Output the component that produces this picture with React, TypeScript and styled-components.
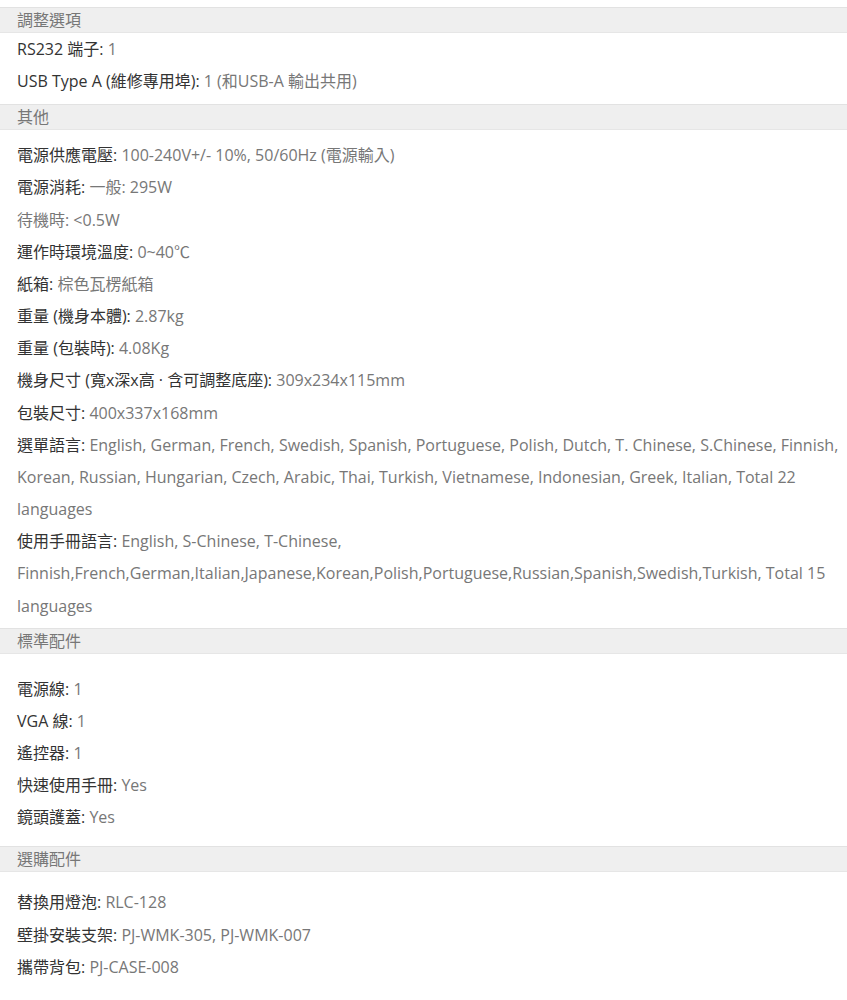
import React from "react";
import styled, { createGlobalStyle } from "styled-components";

const Global = createGlobalStyle`
  html, body { margin: 0; padding: 0; background: #fff; }
  body {
    font-family: "Open Sans", "Noto Sans CJK TC", sans-serif;
    font-size: 16px;
    color: #333;
  }
`;

const Page = styled.div`
  padding-top: 7px;
  display: flex;
  flex-direction: column;
`;

const Header = styled.div<{ $mt: number }>`
  margin-top: ${(p) => p.$mt}px;
  height: 24px;
  line-height: 24px;
  background: #efefef;
  border-top: 1px solid #e2e2e2;
  border-bottom: 1px solid #e6e6e6;
  padding-left: 17px;
  color: #777;
  font-size: 16px;
`;

const Body = styled.div<{ $pt: number }>`
  padding: ${(p) => p.$pt}px 4px 0 17px;
`;

const Row = styled.div`
  line-height: 32.15px;
  color: #777;
`;

const Label = styled.span`
  color: #333;
`;

type Item = { label?: string; value: string };
type Section = { title: string; mt: number; pt: number; items: Item[] };

const sections: Section[] = [
  {
    title: "調整選項",
    mt: 0,
    pt: 0,
    items: [
      { label: "RS232 端子:", value: " 1" },
      { label: "USB Type A (維修專用埠):", value: " 1 (和USB-A 輸出共用)" },
    ],
  },
  {
    title: "其他",
    mt: 7,
    pt: 9,
    items: [
      { label: "電源供應電壓:", value: " 100-240V+/- 10%, 50/60Hz (電源輸入)" },
      { label: "電源消耗:", value: " 一般: 295W" },
      { value: "待機時: <0.5W" },
      { label: "運作時環境溫度:", value: " 0~40℃" },
      { label: "紙箱:", value: " 棕色瓦楞紙箱" },
      { label: "重量 (機身本體):", value: " 2.87kg" },
      { label: "重量 (包裝時):", value: " 4.08Kg" },
      { label: "機身尺寸 (寬x深x高 · 含可調整底座):", value: " 309x234x115mm" },
      { label: "包裝尺寸:", value: " 400x337x168mm" },
      {
        label: "選單語言:",
        value:
          " English, German, French, Swedish, Spanish, Portuguese, Polish, Dutch, T. Chinese, S.Chinese, Finnish, Korean, Russian, Hungarian, Czech, Arabic, Thai, Turkish, Vietnamese, Indonesian, Greek, Italian, Total 22 languages",
      },
      {
        label: "使用手冊語言:",
        value:
          " English, S-Chinese, T-Chinese, Finnish,French,German,Italian,Japanese,Korean,Polish,Portuguese,Russian,Spanish,Swedish,Turkish, Total 15 languages",
      },
    ],
  },
  {
    title: "標準配件",
    mt: 6,
    pt: 19,
    items: [
      { label: "電源線:", value: " 1" },
      { label: "VGA 線:", value: " 1" },
      { label: "遙控器:", value: " 1" },
      { label: "快速使用手冊:", value: " Yes" },
      { label: "鏡頭護蓋:", value: " Yes" },
    ],
  },
  {
    title: "選購配件",
    mt: 13,
    pt: 14,
    items: [
      { label: "替換用燈泡:", value: " RLC-128" },
      { label: "壁掛安裝支架:", value: " PJ-WMK-305, PJ-WMK-007" },
      { label: "攜帶背包:", value: " PJ-CASE-008" },
    ],
  },
];

export default function App() {
  return (
    <>
      <Global />
      <Page>
        {sections.map((s) => (
          <React.Fragment key={s.title}>
            <Header $mt={s.mt}>{s.title}</Header>
            <Body $pt={s.pt}>
              {s.items.map((it, i) => (
                <Row key={i}>
                  {it.label && <Label>{it.label}</Label>}
                  {it.value}
                </Row>
              ))}
            </Body>
          </React.Fragment>
        ))}
      </Page>
    </>
  );
}
